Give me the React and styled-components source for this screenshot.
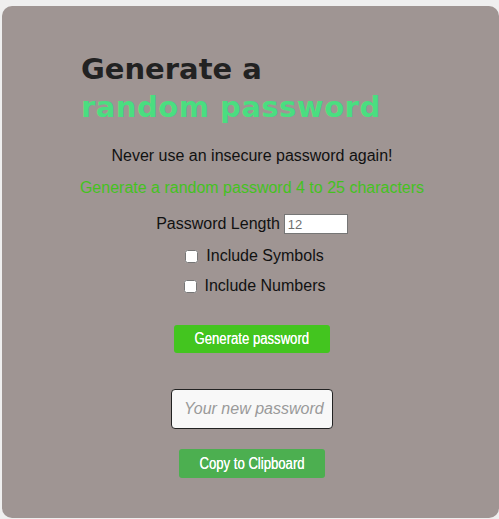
import React from "react";
import styled, { createGlobalStyle } from "styled-components";

const Global = createGlobalStyle`
  html, body { margin: 0; padding: 0; background: #efefef; }
  body { font-family: "Liberation Sans", Arial, sans-serif; }
`;

const Page = styled.div`
  padding: 6px 0 0 2px;
  height: 519px;
  box-sizing: border-box;
  overflow: hidden;
`;

const Card = styled.main`
  background: #9f9593;
  border-radius: 10px;
  height: 512px;
  box-sizing: border-box;
  padding: 44px 0 0 3px;
  display: flex;
  flex-direction: column;
  align-items: center;
  color: #111;
  font-size: 16px;
`;

const Title = styled.h1`
  align-self: flex-start;
  margin: 0 0 0 76px;
  font-family: "DejaVu Sans", sans-serif;
  font-weight: 700;
  font-size: 29px;
  line-height: 38px;
  color: #222;
`;

const Accent = styled.span`
  display: block;
  color: #4ade80;
  letter-spacing: 0.5px;
`;

const Text = styled.p`
  margin: ${(p) => p.$mt || 0}px 0 0;
  color: ${(p) => p.$color || "#111"};
  line-height: 18px;
`;

const Row = styled.label`
  display: flex;
  align-items: center;
  gap: 4px;
  margin-top: ${(p) => p.$mt || 0}px;
  line-height: 18px;
`;

const LengthInput = styled.input`
  width: 64px;
  height: 20px;
  box-sizing: border-box;
  font-family: "Liberation Sans", Arial, sans-serif;
  font-size: 13px;
  border: 1px solid #767676;
  padding: 1px 3px;
  &::placeholder { color: #6f6f6f; }
`;

const Check = styled.input`
  width: 13px;
  height: 13px;
  margin: 0 4px 0 5px;
`;

const Button = styled.button`
  margin-top: ${(p) => p.$mt}px;
  width: ${(p) => p.$w}px;
  height: ${(p) => p.$h}px;
  background: ${(p) => p.$bg};
  color: #fff;
  border: none;
  border-radius: 3px;
  font-family: "Liberation Sans", Arial, sans-serif;
  font-weight: 400;
  font-size: 16px;
  cursor: pointer;
  padding: 0;
  display: flex;
  align-items: center;
  justify-content: center;
  white-space: nowrap;
`;

const Narrow = styled.span`
  display: inline-block;
  transform: scaleX(0.82);
  text-shadow: 0 0 0.3px #fff;
`;

const Output = styled.input`
  margin-top: 36px;
  width: 162px;
  height: 40px;
  box-sizing: border-box;
  border: 1px solid #222;
  border-radius: 4px;
  background: #f8f8f8;
  font-family: "Liberation Sans", Arial, sans-serif;
  font-size: 16px;
  padding: 0 4px 0 12px;
  &::placeholder { color: #9a9a9a; font-style: italic; }
`;

export default function App() {
  return (
    <Page>
      <Global />
      <Card>
        <Title>
          Generate a
          <Accent>random password</Accent>
        </Title>
        <Text $mt={21}>Never use an insecure password again!</Text>
        <Text $mt={14} $color="#44c21e">Generate a random password 4 to 25 characters</Text>
        <Row $mt={17}>
          Password Length <LengthInput placeholder="12" />
        </Row>
        <Row $mt={13}>
          <Check type="checkbox" /> Include Symbols
        </Row>
        <Row $mt={12}>
          <Check type="checkbox" /> Include Numbers
        </Row>
        <Button $mt={30} $w={156} $h={28} $bg="#43c51f">
          <Narrow>Generate password</Narrow>
        </Button>
        <Output placeholder="Your new password" readOnly />
        <Button $mt={20} $w={146} $h={29} $bg="#4caf50">
          <Narrow>Copy to Clipboard</Narrow>
        </Button>
      </Card>
    </Page>
  );
}
